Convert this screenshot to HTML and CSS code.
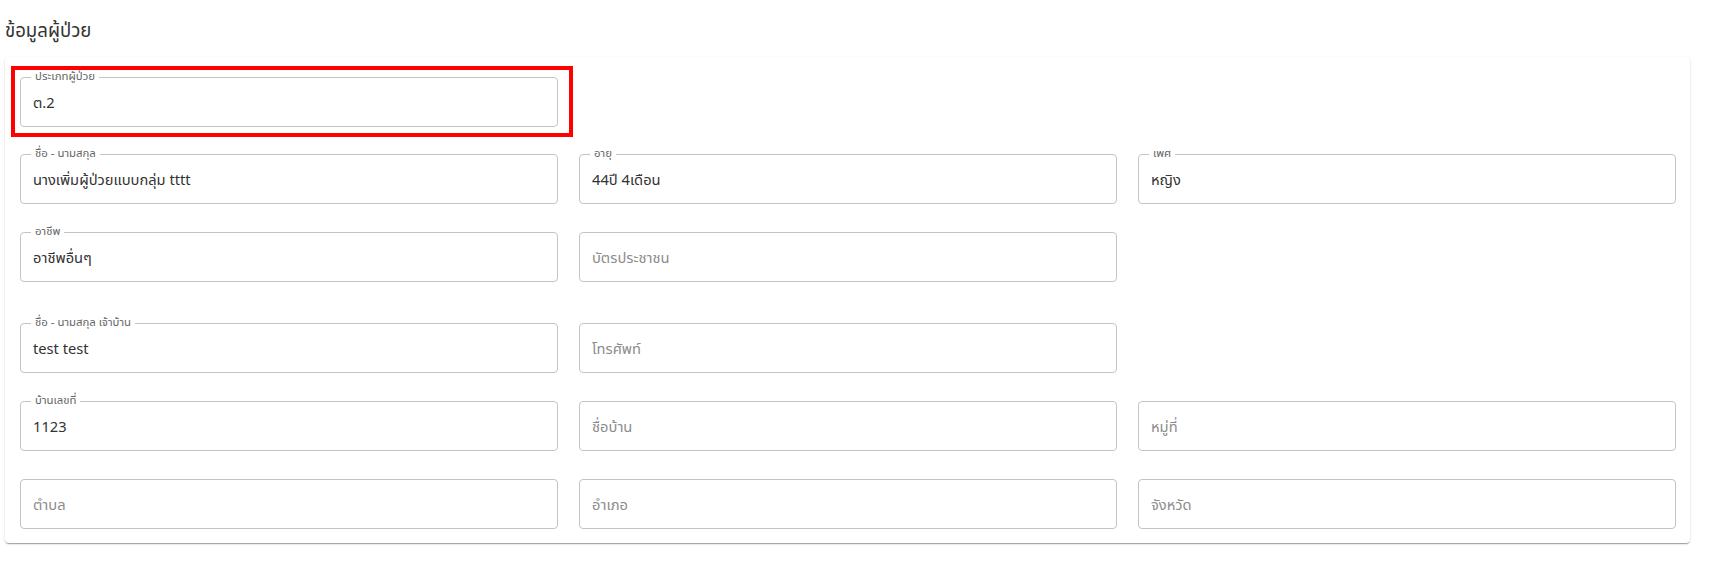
FILE: index.html
```html
<!DOCTYPE html>
<html lang="th">
<head>
  <meta charset="UTF-8">
  <meta name="viewport" content="width=device-width, initial-scale=1.0">
  <title>ข้อมูลผู้ป่วย</title>
  <link rel="stylesheet" href="styles.css">
</head>
<body>
  <div class="page">
    <h2 class="section-title">ข้อมูลผู้ป่วย</h2>
    <div class="card">
      <div class="highlight-row">
        <div class="highlight">
          <div class="field">
            <span class="field-label">ประเภทผู้ป่วย</span>
            <span class="field-value">ต.2</span>
          </div>
        </div>
      </div>

      <div class="field-grid">
        <div class="field">
          <span class="field-label">ชื่อ - นามสกุล</span>
          <span class="field-value">นางเพิ่มผู้ป่วยแบบกลุ่ม tttt</span>
        </div>
        <div class="field">
          <span class="field-label">อายุ</span>
          <span class="field-value">44ปี 4เดือน</span>
        </div>
        <div class="field">
          <span class="field-label">เพศ</span>
          <span class="field-value">หญิง</span>
        </div>

        <div class="field">
          <span class="field-label">อาชีพ</span>
          <span class="field-value">อาชีพอื่นๆ</span>
        </div>
        <div class="field">
          <span class="placeholder">บัตรประชาชน</span>
        </div>
        <div></div>

        <div class="field push">
          <span class="field-label">ชื่อ - นามสกุล เจ้าบ้าน</span>
          <span class="field-value">test test</span>
        </div>
        <div class="field push">
          <span class="placeholder">โทรศัพท์</span>
        </div>
        <div class="push"></div>

        <div class="field">
          <span class="field-label">บ้านเลขที่</span>
          <span class="field-value">1123</span>
        </div>
        <div class="field">
          <span class="placeholder">ชื่อบ้าน</span>
        </div>
        <div class="field">
          <span class="placeholder">หมู่ที่</span>
        </div>

        <div class="field">
          <span class="placeholder">ตำบล</span>
        </div>
        <div class="field">
          <span class="placeholder">อำเภอ</span>
        </div>
        <div class="field">
          <span class="placeholder">จังหวัด</span>
        </div>
      </div>
    </div>

    <h2 class="section-title next">ข้อมูลการเยี่ยมบ้าน</h2>
  </div>
</body>
</html>
```

FILE: styles.css
```css
body {
  margin: 0;
  font-family: "Noto Sans Thai", "Noto Sans", "Liberation Sans", sans-serif;
  background-color: #fff;
  color: #333;
}
.page {
  padding: 0 21px 0 5px;
}
.section-title {
  margin: 0;
  padding-top: 19px;
  margin-bottom: 14px;
  font-size: 18.6px;
  font-weight: 400;
  line-height: 24px;
  color: #333;
}
.section-title.next {
  margin-top: 37px;
  padding-top: 0;
}
.card {
  background-color: #fff;
  border-radius: 4px;
  box-shadow: 0 2px 1px -1px rgba(0, 0, 0, 0.2), 0 1px 1px 0 rgba(0, 0, 0, 0.14), 0 1px 3px 0 rgba(0, 0, 0, 0.12);
  padding: 9px 14px 14px 15px;
}
.highlight-row {
  margin-left: -9px;
}
.highlight {
  width: 538px;
  border: 4px solid #ff0000;
  padding: 7px 11px 6px 5px;
}
.field-grid {
  display: grid;
  grid-template-columns: repeat(3, 1fr);
  column-gap: 21px;
  row-gap: 28px;
  margin-top: 17px;
}
.field-grid .push {
  margin-top: 13px;
}
.field {
  position: relative;
  box-sizing: border-box;
  height: 50px;
  border: 1px solid #c4c4c4;
  border-radius: 4px;
  display: flex;
  align-items: center;
  padding: 3px 12px 0 12px;
  font-size: 14.7px;
}
.field-label {
  position: absolute;
  top: -8px;
  left: 10px;
  padding: 0 4px;
  background-color: #fff;
  font-size: 11.4px;
  line-height: 14px;
  color: #666;
}
.field-value {
  color: #333;
}
.placeholder {
  color: #8c8c8c;
}
```
